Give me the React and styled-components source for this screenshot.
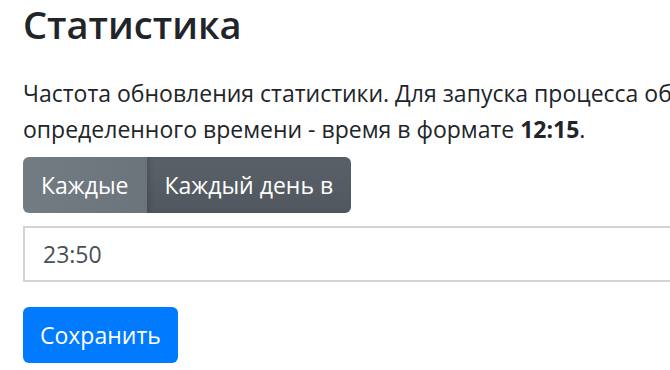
import { useState } from "react";
import styled, { createGlobalStyle } from "styled-components";

const GlobalStyle = createGlobalStyle`
  html, body {
    margin: 0;
    padding: 0;
    background: #fff;
    overflow: hidden;
  }
  body {
    font-family: "Open Sans", "Noto Sans", sans-serif;
    color: #212529;
  }
`;

const Page = styled.div`
  width: 1100px;
  padding: 2px 23px 0;
`;

const Title = styled.h3`
  margin: 0 0 27px;
  font-size: 38px;
  font-weight: 600;
  line-height: 1.2;
  color: #212529;
`;

const Hint = styled.p`
  margin: 0 0 10px;
  font-size: 23px;
  line-height: 36px;
  white-space: nowrap;

  b {
    font-weight: 700;
  }
`;

const Toggle = styled.div`
  display: inline-flex;
  border-radius: 6px;
  overflow: hidden;
  margin-bottom: 13px;
`;

const ToggleBtn = styled.button`
  font-family: inherit;
  font-size: 23px;
  line-height: 36px;
  padding: 10px 18px;
  border: 0;
  color: #fff;
  cursor: pointer;
  background: ${(p) =>
    p.$active
      ? "linear-gradient(180deg, #5a6168, #51575e)"
      : "linear-gradient(90deg, #737b83, #6c747b)"};
  box-shadow: ${(p) =>
    p.$active ? "inset 3px 0 4px rgba(0, 0, 0, 0.12)" : "none"};
`;

const TimeInput = styled.input`
  display: block;
  box-sizing: border-box;
  width: 100%;
  height: 56px;
  padding: 0 18px;
  margin: 0 0 25px;
  border: 2px solid #d3d3d3;
  border-radius: 0;
  font-family: inherit;
  font-size: 23px;
  color: #495057;
  outline: none;
`;

const SaveBtn = styled.button`
  font-family: inherit;
  font-size: 23px;
  line-height: 36px;
  padding: 10px 17px;
  border: 0;
  border-radius: 6px;
  background: #007bff;
  color: #fff;
  cursor: pointer;
`;

export default function App() {
  const [mode, setMode] = useState("daily");
  const [time, setTime] = useState("23:50");

  return (
    <>
      <GlobalStyle />
      <Page>
        <Title>Статистика</Title>
        <Hint>
          Частота обновления статистики. Для запуска процесса обновления каждые N минут - число минут, для запуска в
          <br />
          определенного времени - время в формате <b>12:15</b>.
        </Hint>
        <Toggle>
          <ToggleBtn $active={mode === "every"} onClick={() => setMode("every")}>
            Каждые
          </ToggleBtn>
          <ToggleBtn $active={mode === "daily"} onClick={() => setMode("daily")}>
            Каждый день в
          </ToggleBtn>
        </Toggle>
        <TimeInput value={time} onChange={(e) => setTime(e.target.value)} />
        <SaveBtn>Сохранить</SaveBtn>
      </Page>
    </>
  );
}
